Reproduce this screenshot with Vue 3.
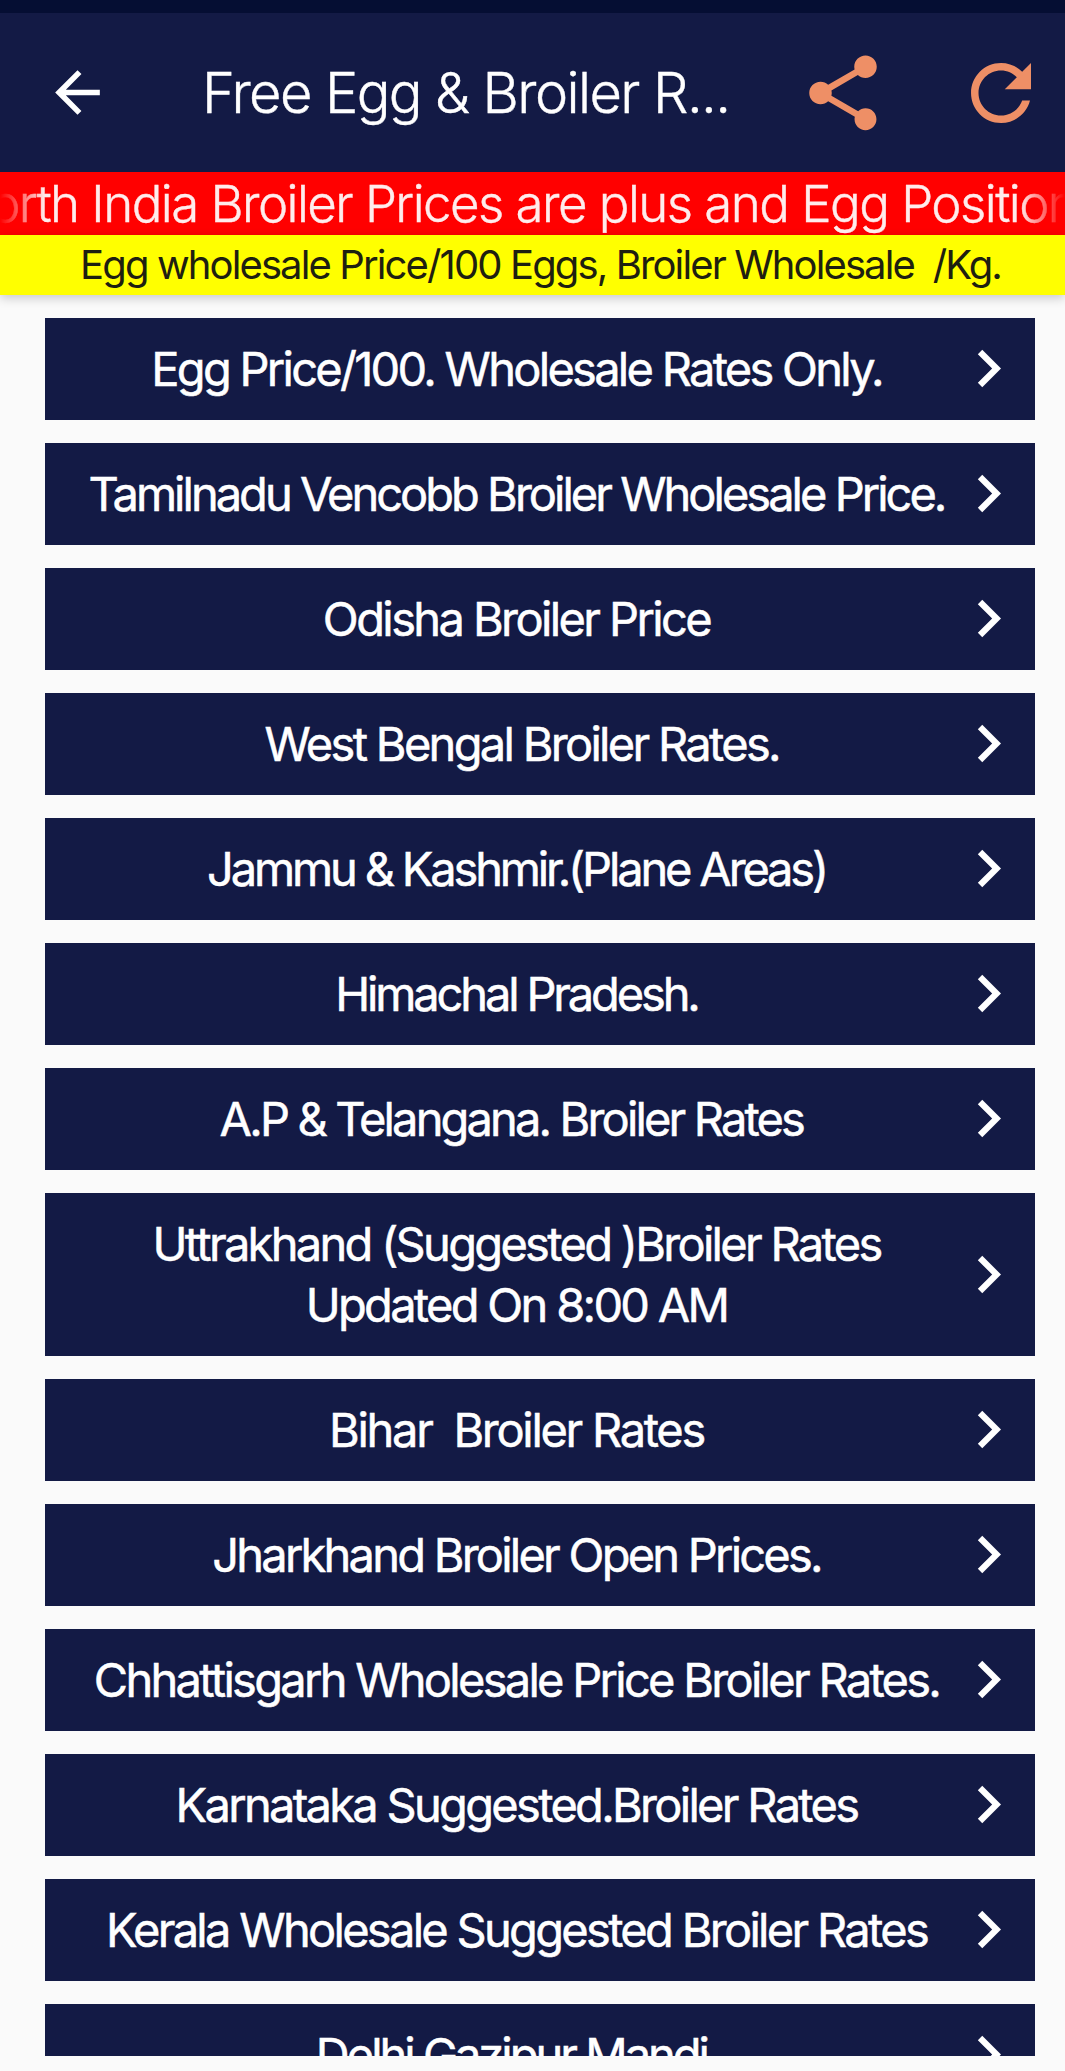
<template>
  <div class="screen">
    <div class="status-bar"></div>

    <header class="app-bar">
      <button class="icon-button back" aria-label="Back">
        <svg viewBox="0 0 24 24">
          <path d="M20 11H7.83l5.59-5.59L12 4l-8 8 8 8 1.41-1.41L7.83 13H20v-2z" />
        </svg>
      </button>
      <h1 class="title">Free Egg &amp; Broiler R...</h1>
      <button class="icon-button action" aria-label="Share">
        <svg viewBox="0 0 24 24">
          <path
            d="M18 16.08c-.76 0-1.44.3-1.96.77L8.91 12.7c.05-.23.09-.46.09-.7s-.04-.47-.09-.7l7.05-4.11c.54.5 1.25.81 2.04.81 1.66 0 3-1.34 3-3s-1.34-3-3-3-3 1.34-3 3c0 .24.04.47.09.7L8.04 9.81C7.5 9.31 6.79 9 6 9c-1.66 0-3 1.34-3 3s1.34 3 3 3c.79 0 1.5-.31 2.04-.81l7.12 4.16c-.05.21-.08.43-.08.65 0 1.61 1.31 2.92 2.92 2.92s2.92-1.31 2.92-2.92-1.31-2.92-2.92-2.92z"
          />
        </svg>
      </button>
      <button class="icon-button action" aria-label="Refresh">
        <svg viewBox="0 0 24 24">
          <path
            d="M17.65 6.35C16.2 4.9 14.21 4 12 4c-4.42 0-7.99 3.58-7.99 8s3.57 8 7.99 8c3.73 0 6.84-2.55 7.73-6h-2.08c-.82 2.33-3.04 4-5.65 4-3.31 0-6-2.69-6-6s2.69-6 6-6c1.66 0 3.14.69 4.22 1.78L13 11h7V4l-2.35 2.35z"
          />
        </svg>
      </button>
    </header>

    <div class="ticker">
      <div class="ticker-window">
        <span class="ticker-text">North India Broiler Prices are plus and Egg Position</span>
      </div>
    </div>
    <div class="notice">Egg wholesale Price/100 Eggs, Broiler Wholesale&nbsp; /Kg.</div>

    <main class="list">
      <button
        v-for="item in items"
        :key="item.label"
        class="row"
        @click="openItem(item)"
      >
        <span class="label" :style="{ letterSpacing: item.tracking + 'px' }">{{ item.label }}</span>
        <svg class="chevron" viewBox="0 0 24 24">
          <path d="M10 6L8.59 7.41 13.17 12l-4.58 4.59L10 18l6-6z" />
        </svg>
      </button>
    </main>
  </div>
</template>

<script setup>
const emit = defineEmits(['open'])

const items = [
  { label: 'Egg Price/100. Wholesale Rates Only.', tracking: -2.72 },
  { label: 'Tamilnadu Vencobb Broiler Wholesale Price.', tracking: -2.98 },
  { label: 'Odisha Broiler Price', tracking: -2.6 },
  { label: ' West Bengal Broiler Rates.', tracking: -2.7 },
  { label: 'Jammu & Kashmir.(Plane Areas)', tracking: -3.15 },
  { label: 'Himachal Pradesh.', tracking: -3.15 },
  { label: 'A.P & Telangana. Broiler Rates ', tracking: -2.85 },
  { label: 'Uttrakhand (Suggested )Broiler Rates\nUpdated On 8:00 AM', tracking: -2.7 },
  { label: 'Bihar  Broiler Rates', tracking: -2.3 },
  { label: 'Jharkhand Broiler Open Prices.', tracking: -2.77 },
  { label: 'Chhattisgarh Wholesale Price Broiler Rates.', tracking: -2.72 },
  { label: 'Karnataka Suggested.Broiler Rates', tracking: -2.7 },
  { label: 'Kerala Wholesale Suggested Broiler Rates', tracking: -2.7 },
  { label: 'Delhi Gazipur Mandi ', tracking: -3 }
]

const openItem = (item) => {
  emit('open', item.label.trim())
}
</script>

<style>
body {
  background: #fafafa;
}
</style>

<style scoped>
.screen {
  display: flex;
  flex-direction: column;
  width: 1065px;
  height: 2071px;
  overflow: hidden;
  background: #fafafa;
  font-family: Inter, "Liberation Sans", sans-serif;
}

button {
  margin: 0;
  padding: 0;
  border: 0;
  font: inherit;
  cursor: pointer;
}

svg {
  display: block;
  fill: currentColor;
}

.status-bar {
  flex: none;
  height: 13px;
  background: #050e33;
}

.app-bar {
  flex: none;
  display: flex;
  align-items: center;
  height: 159px;
  padding: 0 19px 0 44px;
  box-sizing: border-box;
  background: #131a45;
  color: #fff;
}

.icon-button {
  flex: none;
  background: none;
  color: inherit;
}

.back svg {
  width: 67px;
  height: 67px;
}

.action {
  color: #ee8f66;
}

.action svg {
  width: 90px;
  height: 90px;
}

.action + .action {
  margin-left: 68px;
}

.title {
  flex: 1;
  margin: 0;
  padding-left: 91px;
  font-size: 56px;
  font-weight: 300;
  line-height: 70px;
  letter-spacing: -1.6px;
  white-space: nowrap;
  -webkit-text-stroke: 0.4px currentColor;
}

.ticker {
  flex: none;
  height: 63px;
  background: #ff0000;
}

.ticker-window {
  overflow: hidden;
  mask-image: linear-gradient(to right, transparent, #000 45px, #000 calc(100% - 45px), transparent);
}

.ticker-text {
  display: block;
  margin-left: -47px;
  color: #ffecec;
  font-size: 51px;
  font-weight: 300;
  line-height: 64px;
  letter-spacing: -1.55px;
  white-space: nowrap;
  -webkit-text-stroke: 0.4px currentColor;
}

.notice {
  flex: none;
  height: 60px;
  padding-left: 16px;
  background: #ffff00;
  box-shadow: 0 3px 10px rgba(0, 0, 0, 0.2);
  color: #1e2010;
  font-size: 40px;
  line-height: 60px;
  letter-spacing: -1.88px;
  text-align: center;
  white-space: pre;
}

.list {
  flex: none;
  display: flex;
  flex-direction: column;
  gap: 23px;
  height: 1761px;
  padding: 23px 30px 0 45px;
  box-sizing: border-box;
  overflow: hidden;
}

.row {
  flex: none;
  display: flex;
  align-items: center;
  min-height: 102px;
  padding: 20px 9px 21px 37px;
  background: #131a45;
  color: #fff;
}

.label {
  flex: 1;
  min-width: 0;
  font-size: 47px;
  font-weight: 400;
  line-height: 61px;
  text-align: center;
  white-space: pre;
  -webkit-text-stroke: 0.5px currentColor;
}

.chevron {
  flex: none;
  width: 75px;
  height: 75px;
  margin: -7px 0;
}
</style>
